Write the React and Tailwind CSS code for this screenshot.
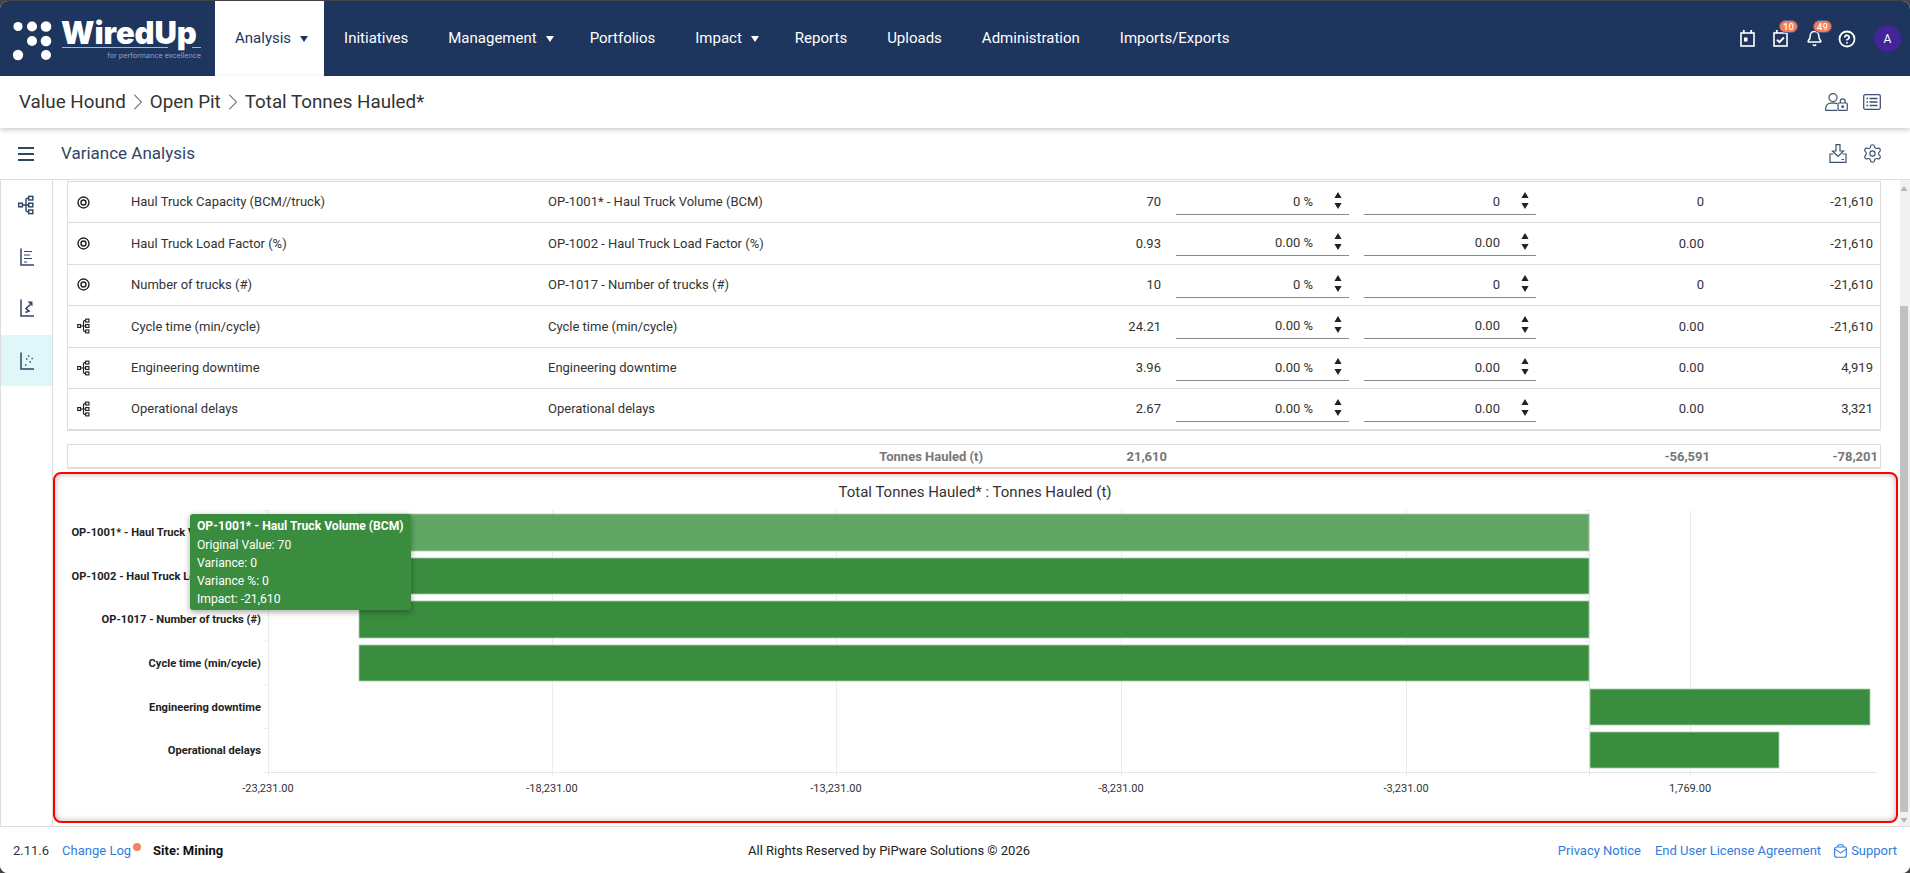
import { ChevronRight, CircleHelp, Bell, Settings } from "lucide-react";

const navItems = [
  { name: "Analysis", caret: true, active: true },
  { name: "Initiatives" },
  { name: "Management", caret: true },
  { name: "Portfolios" },
  { name: "Impact", caret: true },
  { name: "Reports" },
  { name: "Uploads" },
  { name: "Administration" },
  { name: "Imports/Exports" },
];

const rows = [
  { icon: "target", name: "Haul Truck Capacity (BCM//truck)", kpi: "OP-1001* - Haul Truck Volume (BCM)", orig: "70", pct: "0 %", variance: "0", value: "0", impact: "-21,610" },
  { icon: "target", name: "Haul Truck Load Factor (%)", kpi: "OP-1002 - Haul Truck Load Factor (%)", orig: "0.93", pct: "0.00 %", variance: "0.00", value: "0.00", impact: "-21,610" },
  { icon: "target", name: "Number of trucks (#)", kpi: "OP-1017 - Number of trucks (#)", orig: "10", pct: "0 %", variance: "0", value: "0", impact: "-21,610" },
  { icon: "tree", name: "Cycle time (min/cycle)", kpi: "Cycle time (min/cycle)", orig: "24.21", pct: "0.00 %", variance: "0.00", value: "0.00", impact: "-21,610" },
  { icon: "tree", name: "Engineering downtime", kpi: "Engineering downtime", orig: "3.96", pct: "0.00 %", variance: "0.00", value: "0.00", impact: "4,919" },
  { icon: "tree", name: "Operational delays", kpi: "Operational delays", orig: "2.67", pct: "0.00 %", variance: "0.00", value: "0.00", impact: "3,321" },
];

const bars = [
  { label: "OP-1001* - Haul Truck Volume (BCM)", x: 359, w: 1230, y: 514, h: 37, fill: "#62a666" },
  { label: "OP-1002 - Haul Truck Load Factor (%)", x: 359, w: 1230, y: 558, h: 36, fill: "#3a8c3f" },
  { label: "OP-1017 - Number of trucks (#)", x: 359, w: 1230, y: 601, h: 37, fill: "#3a8c3f" },
  { label: "Cycle time (min/cycle)", x: 359, w: 1230, y: 645, h: 36, fill: "#3a8c3f" },
  { label: "Engineering downtime", x: 1590, w: 280, y: 689, h: 36, fill: "#3a8c3f" },
  { label: "Operational delays", x: 1590, w: 189, y: 732, h: 36, fill: "#3a8c3f" },
];

const ticks = [
  { x: 268, label: "-23,231.00" },
  { x: 552, label: "-18,231.00" },
  { x: 836, label: "-13,231.00" },
  { x: 1121, label: "-8,231.00" },
  { x: 1406, label: "-3,231.00" },
  { x: 1690, label: "1,769.00" },
];

function TreeIcon({ className }) {
  return (
    <svg className={className} viewBox="0 0 18 22" fill="none" stroke="currentColor" strokeWidth="1.6">
      <rect x="1" y="9" width="4" height="4" />
      <rect x="12" y="1.5" width="4.5" height="4" />
      <rect x="12" y="9" width="4.5" height="4" />
      <rect x="12" y="16.5" width="4.5" height="4" />
      <path d="M5 11h7M12 3.5h-1.5a1.5 1.5 0 0 0-1.5 1.5v12a1.5 1.5 0 0 0 1.5 1.5H12" />
    </svg>
  );
}

function TargetIcon({ className }) {
  return (
    <svg className={className} viewBox="0 0 14 14" fill="none" stroke="currentColor" strokeWidth="1.5">
      <circle cx="7" cy="7" r="5.9" />
      <circle cx="7" cy="7" r="2.7" />
    </svg>
  );
}

function BarsIcon({ className }) {
  return (
    <svg className={className} viewBox="0 0 14 18" fill="none" stroke="currentColor" strokeWidth="1.5">
      <path d="M1 0.5V17h13" />
      <path d="M4 3.5h8M4 7h6M4 10.5h8M4 14h3" strokeWidth="1.2" />
    </svg>
  );
}

function TrendIcon({ className }) {
  return (
    <svg className={className} viewBox="0 0 14 18" fill="none" stroke="currentColor" strokeWidth="1.5">
      <path d="M1 0.5V17h13" />
      <path d="M5.5 13.5l3.5-1.5-3-2.5 4.5-4" strokeWidth="1.6" />
      <path d="M7.5 2.5h5v5z" fill="currentColor" stroke="none" />
    </svg>
  );
}

function DotsIcon({ className }) {
  return (
    <svg className={className} viewBox="0 0 14 18" fill="none" stroke="currentColor" strokeWidth="1.5">
      <path d="M1 0.5V17h13" />
      <path d="M5 13h1.4M6 7h1.4M8 4h1.4M9.5 10h1.4M11.5 6.5h1.4" strokeWidth="1.4" />
    </svg>
  );
}

function CalendarIcon({ className, check }) {
  return (
    <svg className={className} viewBox="0 0 15 17" fill="none" stroke="white" strokeWidth="1.6">
      <rect x="1" y="3" width="13" height="13" />
      <path d="M3.8 0v3M11.2 0v3" strokeWidth="1.8" />
      {check ? (
        <path d="M4 9.8l2.4 2.4L11 7.5" strokeWidth="2" />
      ) : (
        <rect x="4" y="7.5" width="3.5" height="4" fill="white" stroke="none" />
      )}
    </svg>
  );
}

function UserLockIcon({ className }) {
  return (
    <svg className={className} viewBox="0 0 23 18" fill="none" stroke="currentColor" strokeWidth="1.2">
      <circle cx="8" cy="4.6" r="4" />
      <path d="M0.7 17.4v-2.2c0-3 2.2-5 5-5h4.5c.8 0 1.4.1 2 .4M0.7 17.4h11.3" />
      <rect x="13" y="10" width="9.3" height="7.4" rx="1" />
      <path d="M15.3 10V8.2a2.4 2.4 0 0 1 4.8 0V10" />
      <circle cx="17.7" cy="13.7" r="0.8" fill="currentColor" />
    </svg>
  );
}

function ListIcon({ className }) {
  return (
    <svg className={className} viewBox="0 0 18 16" fill="none" stroke="currentColor" strokeWidth="1.3">
      <rect x="0.7" y="0.7" width="16.6" height="14.6" rx="1.5" />
      <path d="M3.5 4.5h1.5M3.5 8h1.5M3.5 11.5h1.5M6.5 4.5h8M6.5 8h8M6.5 11.5h8" strokeWidth="1.5" />
    </svg>
  );
}

function DownloadTrayIcon({ className }) {
  return (
    <svg className={className} viewBox="0 0 18 19" fill="none" stroke="currentColor" strokeWidth="1.2">
      <path d="M7 0.7h4v6.3h3.5L9 12.5 3.5 7H7z" />
      <path d="M4.5 10H1v8.3h16V10h-3.5" />
      <path d="M12.5 15.5h2.5" />
    </svg>
  );
}

function SupportIcon({ className }) {
  return (
    <svg className={className} viewBox="0 0 14 15" fill="none" stroke="currentColor" strokeWidth="1.2">
      <rect x="0.7" y="3.2" width="12.6" height="11" rx="2.2" />
      <path d="M0.9 5.5L7 9.5l6.1-4M4 3.2V2.2c0-.8.6-1.5 1.4-1.5h3.2c.8 0 1.4.7 1.4 1.5v1" />
    </svg>
  );
}

function Spinner() {
  return (
    <svg className="mr-[7px] w-[8px] h-[17px] shrink-0" viewBox="0 0 8 17" fill="#222">
      <path d="M4 0l3.6 6H.4zM4 17L.4 11h7.2z" />
    </svg>
  );
}

function NumberInput({ value }) {
  return (
    <div className="ml-[15px] self-start h-[33px] pt-[10px] flex items-start justify-end gap-[21px] border-b border-[#888] text-[13px] text-[#333] leading-[20px]">
      <span>{value}</span>
      <Spinner />
    </div>
  );
}

function Logo() {
  return (
    <div className="w-[215px] h-full relative shrink-0">
      <svg className="absolute left-[12px] top-[20px] w-[40px] h-[40px]" viewBox="0 0 40 40" fill="white">
        <circle cx="6" cy="5.5" r="4.6" />
        <circle cx="20" cy="5.5" r="5" />
        <circle cx="34" cy="5.5" r="5.3" />
        <circle cx="20" cy="20" r="5" />
        <circle cx="34" cy="20" r="5.3" />
        <circle cx="6" cy="34" r="5.2" />
        <circle cx="34" cy="34" r="5" />
      </svg>
      <span className="absolute left-[61px] top-[13px] text-[31px] leading-[38px] font-black font-[Inter,sans-serif] text-white tracking-[-0.1px]">
        WiredUp
      </span>
      <div className="absolute left-[62px] top-[46px] w-[106px] h-px bg-[#a9b6cc]" />
      <div className="absolute left-[192px] top-[46px] w-[9px] h-px bg-[#a9b6cc]" />
      <span className="absolute right-[14px] top-[50px] text-[7.2px] leading-[10px] text-[#93a3bf] font-[Inter,sans-serif]">
        for performance excellence
      </span>
    </div>
  );
}

function TopNav() {
  return (
    <header className="h-[75px] shrink-0 bg-[#1e355e] flex items-stretch text-[15px]">
      <Logo />
      <nav className="flex items-stretch">
        {navItems.map((item) => (
          <div
            key={item.name}
            className={`flex items-center px-5 ${item.active ? "bg-white text-[#1e355e]" : "text-white"}`}
          >
            <span>{item.name}</span>
            {item.caret && (
              <svg className="ml-[9px] mr-[-4px] w-[8px] h-[6px]" viewBox="0 0 8 6" fill="currentColor">
                <path d="M0 0h8L4 6z" />
              </svg>
            )}
          </div>
        ))}
      </nav>
      <div className="ml-auto flex items-center relative pr-[9px]">
        <CalendarIcon className="w-[15px] h-[17px] mr-[18px]" />
        <div className="relative mr-[18px]">
          <CalendarIcon check className="w-[15px] h-[17px]" />
          <span className="absolute left-[6px] top-[-10px] w-[19px] h-[13px] rounded-full bg-[#f47c55] border border-[#4b5a9e] text-white text-[9.5px] font-medium leading-[11px] text-center">
            10
          </span>
        </div>
        <div className="relative mr-[15px]">
          <Bell className="w-[17px] h-[17px] text-white" strokeWidth={2.2} />
          <span className="absolute left-[7px] top-[-10px] w-[19px] h-[13px] rounded-full bg-[#f47c55] border border-[#4b5a9e] text-white text-[9.5px] font-medium leading-[11px] text-center">
            49
          </span>
        </div>
        <CircleHelp className="w-[18px] h-[18px] text-white mr-[18px]" strokeWidth={2.4} />
        <div className="w-[27px] h-[27px] rounded-full bg-[#44249a] text-white text-[12px] flex items-center justify-center">
          A
        </div>
      </div>
    </header>
  );
}

function Breadcrumb() {
  return (
    <div className="h-[52px] shrink-0 bg-white relative z-10 shadow-[0_2px_5px_rgba(0,0,0,0.2)] flex items-center pl-[19px] pr-[29px] text-[18.8px] text-[#333]">
      <span>Value Hound</span>
      <ChevronRight className="-mx-[2px] w-[28px] h-[28px] text-[#7b8794]" strokeWidth={1} />
      <span>Open Pit</span>
      <ChevronRight className="-mx-[2px] w-[28px] h-[28px] text-[#7b8794]" strokeWidth={1} />
      <span>Total Tonnes Hauled*</span>
      <div className="ml-auto flex items-center gap-[15px] text-[#3d5270]">
        <UserLockIcon className="w-[23px] h-[18px]" />
        <ListIcon className="w-[18px] h-[16px]" />
      </div>
    </div>
  );
}

function SubBar() {
  return (
    <div className="h-[52px] shrink-0 bg-white border-b border-[#ddd] flex items-center pl-[18px] pr-[27px] text-[17px] text-[#2f4664]">
      <div className="w-[16px] flex flex-col gap-[4px] mr-[27px]">
        <div className="h-[2px] bg-[#2f4664]" />
        <div className="h-[2px] bg-[#2f4664]" />
        <div className="h-[2px] bg-[#2f4664]" />
      </div>
      <span>Variance Analysis</span>
      <div className="ml-auto flex items-center gap-[15px] text-[#3d5270]">
        <DownloadTrayIcon className="w-[18px] h-[19px]" />
        <Settings className="w-[21px] h-[21px]" strokeWidth={1.3} />
      </div>
    </div>
  );
}

function Sidebar() {
  return (
    <aside className="w-[52px] shrink-0 border-r border-[#ddd] pt-[2px] text-[#2f4664]">
      <div className="h-[51px] flex items-center justify-center pb-[6px] pr-[1px]">
        <TreeIcon className="w-[18px] h-[20px]" />
      </div>
      <div className="h-[51px] flex items-center justify-center pb-[3px]">
        <BarsIcon className="w-[14px] h-[18px]" />
      </div>
      <div className="h-[51px] flex items-center justify-center pb-[3px]">
        <TrendIcon className="w-[14px] h-[18px]" />
      </div>
      <div className="h-[51px] flex items-center justify-center bg-[#e0f7fa]">
        <DotsIcon className="w-[14px] h-[18px]" />
      </div>
    </aside>
  );
}

function VarianceTable() {
  return (
    <div className="ml-[14px] mr-[19px] border-y border-[#ddd] text-[13px] text-[#333]">
      {rows.map((row) => (
        <div
          key={row.name}
          className="h-[41.4px] grid grid-cols-[63px_417px_552px_61px_188px_187px_168px_169px] items-center border-x border-b border-[#ddd]"
        >
          <div className="pl-[9px] flex items-center text-[#222]">
            {row.icon === "target" ? (
              <TargetIcon className="w-[13px] h-[13px]" />
            ) : (
              <TreeIcon className="w-[13px] h-[16px]" />
            )}
          </div>
          <div>{row.name}</div>
          <div>{row.kpi}</div>
          <div className="text-right">{row.orig}</div>
          <NumberInput value={row.pct} />
          <NumberInput value={row.variance} />
          <div className="text-right">{row.value}</div>
          <div className="text-right">{row.impact}</div>
        </div>
      ))}
    </div>
  );
}

function SummaryRow() {
  return (
    <div className="mt-[13px] ml-[14px] mr-[19px] h-[25px] border border-b-2 border-[#ddd] grid grid-cols-[915px_184px_543px_168px] items-center text-[13px] font-bold text-[#777]">
      <div className="text-right">Tonnes Hauled (t)</div>
      <div className="text-right">21,610</div>
      <div className="text-right">-56,591</div>
      <div className="text-right">-78,201</div>
    </div>
  );
}

function ChartTooltip() {
  return (
    <div className="absolute left-[135px] top-[40px] w-[221px] h-[96px] rounded-[3px] bg-[#3a8c3f] shadow-[0_2px_6px_rgba(0,0,0,0.35)] px-[7px] pt-[3px] text-[12.15px] leading-[18px] text-white">
      <div className="font-bold mb-px">OP-1001* - Haul Truck Volume (BCM)</div>
      <div>Original Value: 70</div>
      <div>Variance: 0</div>
      <div>Variance %: 0</div>
      <div>Impact: -21,610</div>
    </div>
  );
}

function Chart() {
  return (
    <div className="relative mt-[3px] mr-[2px] h-[351px] bg-white border-2 border-[#f00] rounded-lg shadow-[inset_0_0_6px_rgba(0,0,0,0.3)]">
      {/* viewBox is in page pixels so the numbers read off the reference directly */}
      <svg className="w-full h-full block" viewBox="55 474 1841 347">
        <text x="975" y="497" textAnchor="middle" fontSize="15" fill="#333">
          Total Tonnes Hauled* : Tonnes Hauled (t)
        </text>
        {ticks.map((t) => (
          <g key={t.label}>
            <path d={`M${t.x + 0.5} 510V776`} stroke="#ececec" />
            <text x={t.x} y="792" textAnchor="middle" fontSize="11" fill="#333">
              {t.label}
            </text>
          </g>
        ))}
        <path d="M1589.5 510V776M268 772.5H1877" stroke="#e6e6e6" />
        {[0, 1, 2, 3, 4, 5, 6].map((i) => (
          <path key={i} d={`M263 ${510.5 + i * 43.6}H268M1585 ${510.5 + i * 43.6}H1589`} stroke="#ececec" />
        ))}
        {bars.map((b) => (
          <g key={b.label}>
            <rect x={b.x} y={b.y} width={b.w} height={b.h} fill={b.fill} stroke="#a8d0aa" strokeWidth="0.8" />
            <text x="261" y={b.y + 22} textAnchor="end" fontSize="11.15" fontWeight="700" fill="#222">
              {b.label}
            </text>
          </g>
        ))}
      </svg>
      <ChartTooltip />
    </div>
  );
}

function ScrollBar() {
  return (
    <div className="w-[10px] shrink-0 bg-[#f1f1f1] flex flex-col items-start">
      <svg className="w-[8px] h-[12px] mt-[3px] mb-[111px]" viewBox="0 0 8 12" fill="#b5b5b5">
        <path d="M4 3l3.5 5h-7z" />
      </svg>
      <div className="w-[8px] h-[506px] bg-[#c1c1c1]" />
      <svg className="w-[8px] h-[12px] mt-[2px]" viewBox="0 0 8 12" fill="#b5b5b5">
        <path d="M4 9L.5 4h7z" />
      </svg>
    </div>
  );
}

function Footer() {
  return (
    <footer className="h-[47px] shrink-0 bg-white border-t border-[#ddd] relative flex items-center pl-[13px] pr-[13px] pt-[2px] text-[13px] text-[#333]">
      <span>2.11.6</span>
      <span className="ml-[13px] text-[#2f7de1]">Change Log</span>
      <span className="w-[8px] h-[8px] rounded-full bg-[#f4845f] ml-[2px] mb-[9px]" />
      <span className="ml-[12px] font-bold text-[#111]">Site: Mining</span>
      <span className="absolute left-[748px] text-[#222]">All Rights Reserved by PiPware Solutions © 2026</span>
      <div className="ml-auto flex items-center text-[#2f7de1]">
        <span>Privacy Notice</span>
        <span className="ml-[14px]">End User License Agreement</span>
        <SupportIcon className="ml-[13px] mr-[4px] w-[13px] h-[14px]" />
        <span>Support</span>
      </div>
    </footer>
  );
}

export default function App() {
  return (
    <div className="h-screen bg-[#444] pt-px overflow-hidden font-[Roboto,sans-serif]">
      <div className="h-full rounded-lg overflow-hidden bg-white flex flex-col">
        <TopNav />
        <Breadcrumb />
        <SubBar />
        <div className="flex-1 min-h-0 flex border-l border-[#ddd]">
          <Sidebar />
          <main className="flex-1 min-w-0 pt-px">
            <VarianceTable />
            <SummaryRow />
            <Chart />
          </main>
          <ScrollBar />
        </div>
        <Footer />
      </div>
    </div>
  );
}
